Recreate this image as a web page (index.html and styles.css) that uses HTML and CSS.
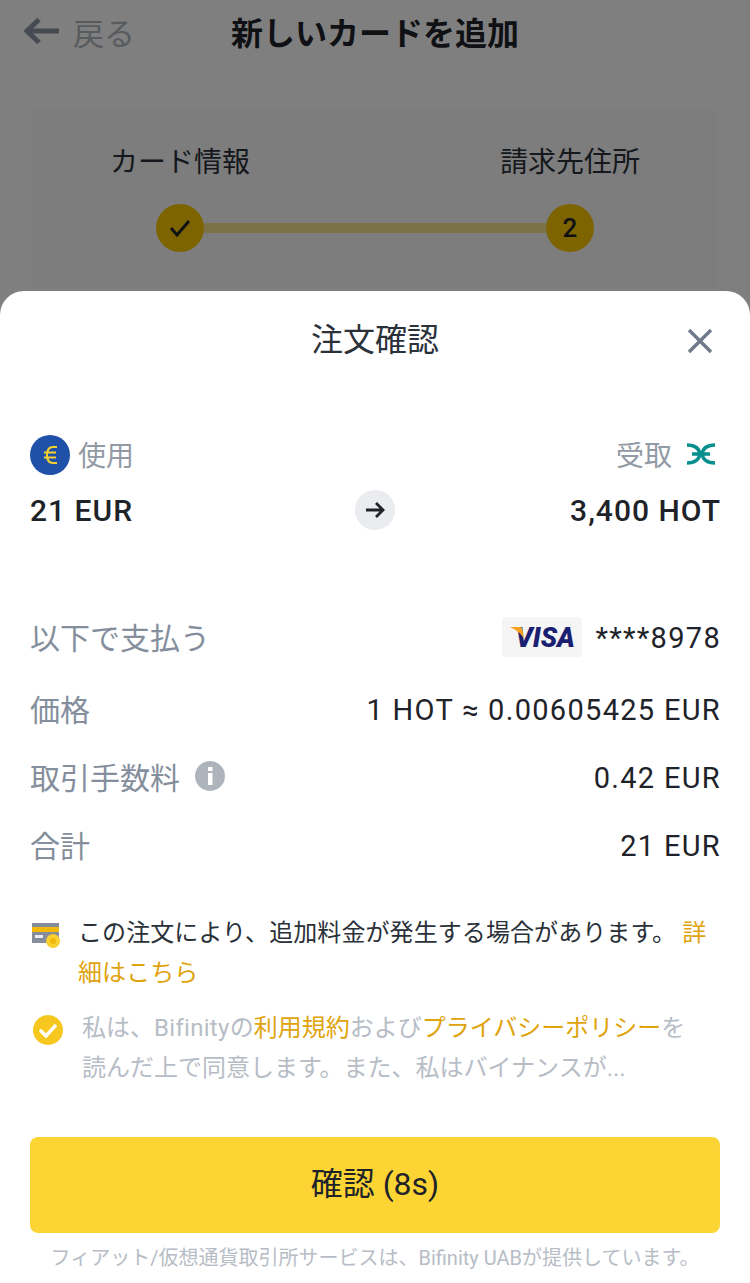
FILE: index.html
```html
<!DOCTYPE html>
<html lang="ja">
<head>
    <meta charset="UTF-8">
    <title>注文確認</title>
    <link rel="stylesheet" href="styles.css">
</head>

<body>
    <div class="page">
        <div class="topbar">
            <div class="back">
                <svg width="36" height="28" viewBox="0 0 36 28"><path d="M36 14H5M16 2.500L4 14l12 11.500" fill="none" stroke="#8c96a4" stroke-width="5"/></svg>
                <span>戻る</span>
            </div>
            <div class="topbar-title">新しいカードを追加</div>
        </div>
        <div class="steps">
            <div class="step-names">
                <span>カード情報</span>
                <span>請求先住所</span>
            </div>
            <div class="step-track">
                <div class="step-dot">
                    <svg width="24" height="20" viewBox="0 0 24 20"><path d="M3 10l6 7L21 3" fill="none" stroke="#1e2329" stroke-width="3"/></svg>
                </div>
                <div class="step-line"></div>
                <div class="step-dot">2</div>
            </div>
        </div>
    </div>

    <div class="dim"></div>

    <div class="sheet">
        <div class="sheet-head">
            <div class="sheet-title">注文確認</div>
            <svg class="close" width="26" height="26" viewBox="0 0 26 26"><path d="M2 2l22 22M24 2L2 24" fill="none" stroke="#707a8a" stroke-width="3.400"/></svg>
        </div>

        <div class="swap">
            <div class="swap-labels">
                <div class="coin">
                    <svg class="eur" width="40" height="40" viewBox="0 0 40 40"><circle cx="20" cy="20" r="20" fill="#1f51a8"/><path d="M27 12h-4c-4 0-6 3-6 8s2 8 6 8h4M14 17.500h12M14 22.500h12" fill="none" stroke="#f8d12f" stroke-width="2"/></svg>
                    <span>使用</span>
                </div>
                <div class="coin">
                    <span>受取</span>
                    <svg class="hot" width="30" height="22" viewBox="0 0 30 22"><path d="M1 2c7 0 12 3 13 9 -1 6-6 9-13 9M29 2c-7 0-12 3-13 9 1 6 6 9 13 9M6 11h18" fill="none" stroke="#0a8f8f" stroke-width="3.400"/></svg>
                </div>
            </div>
            <div class="swap-amounts">
                <span>21 EUR</span>
                <div class="arrow">
                    <svg width="20" height="18" viewBox="0 0 20 18"><path d="M1 9h17M11 2l7 7-7 7" fill="none" stroke="#1e2329" stroke-width="2.800"/></svg>
                </div>
                <span class="amount-end">3,400 HOT</span>
            </div>
        </div>

        <div class="rows">
            <div class="row">
                <span class="row-name">以下で支払う</span>
                <div class="pay">
                    <div class="visa">
                        <svg class="visa-mark" width="14" height="12" viewBox="0 0 14 12"><path d="M0 0h10c2 0 2 1 2.500 3L14 12C11 6 6 3 0 0z" fill="#f7a11c"/></svg>
                        <span class="visa-word">VISA</span>
                    </div>
                    <span class="val">****8978</span>
                </div>
            </div>
            <div class="row">
                <span class="row-name">価格</span>
                <span class="val">1 HOT ≈ 0.00605425 EUR</span>
            </div>
            <div class="row">
                <span class="row-name with-icon">取引手数料
                    <svg width="30" height="30" viewBox="0 0 30 30"><circle cx="15" cy="15" r="15" fill="#aeb4bc"/><rect x="13" y="12" width="4.500" height="12" fill="#fff"/><rect x="13" y="6" width="4.500" height="4" fill="#fff"/></svg>
                </span>
                <span class="val">0.42 EUR</span>
            </div>
            <div class="row">
                <span class="row-name">合計</span>
                <span class="val">21 EUR</span>
            </div>
        </div>

        <div class="note">
            <svg class="note-icon" width="30" height="26" viewBox="0 0 30 26"><rect x="2" y="0" width="27" height="20" fill="#858d9b"/><rect x="2" y="4" width="27" height="5" fill="#f0b90b"/><rect x="5" y="12" width="8" height="3" fill="#eaecef"/><circle cx="23" cy="18" r="7" fill="#f8d12f"/><circle cx="23" cy="18" r="3" fill="#f0b90b"/></svg>
            <p>この注文により、追加料金が発生する場合があります。 <a class="link">詳細はこちら</a></p>
        </div>

        <div class="agree">
            <svg class="agree-icon" width="30" height="30" viewBox="0 0 30 30"><circle cx="15" cy="15" r="15" fill="#f6c71f"/><path d="M7 15l6 6L23 10" fill="none" stroke="#fff" stroke-width="3.400"/></svg>
            <p>私は、<span class="latin">Bifinity</span>の<a class="link">利用規約</a>および<a class="link">プライバシーポリシー</a>を読んだ上で同意します。また、私はバイナンスが...</p>
        </div>

        <div class="confirm">確認 (8s)</div>
        <div class="foot">フィアット/仮想通貨取引所サービスは、Bifinity UABが提供しています。</div>
    </div>
</body></html>
```
FILE: styles.css
```css
* {
    box-sizing: border-box;
}
body {
    position: relative;
    width: 750px;
    height: 1283px;
    margin: 0;
    overflow: hidden;
    background-color: #fff;
    color: #1e2329;
    font-family: "Roboto", "Noto Sans CJK JP", sans-serif;
}

/* page behind the sheet */
.page {
    height: 100%;
}
.topbar {
    position: relative;
    display: flex;
    justify-content: center;
    align-items: center;
    height: 62px;
}
.back {
    position: absolute;
    top: 0;
    left: 23px;
    display: flex;
    align-items: center;
    gap: 14px;
    height: 62px;
    color: #b0b6bd;
    font-size: 31px;
}
.topbar-title {
    font-size: 32px;
    font-weight: 700;
}
.steps {
    height: 178px;
    margin: 48px 32px 0;
    padding-top: 33px;
    background-color: #fafafa;
}
.step-names {
    display: flex;
    justify-content: space-between;
    padding: 0 78px;
    color: #2b3139;
    font-size: 28px;
    line-height: 40px;
}
.step-track {
    display: flex;
    align-items: center;
    margin-top: 21px;
    padding: 0 124px;
}
.step-dot {
    display: flex;
    flex-shrink: 0;
    justify-content: center;
    align-items: center;
    width: 48px;
    height: 48px;
    border-radius: 50%;
    background-color: #fac800;
    font-size: 26px;
    font-weight: 500;
}
.step-line {
    flex: 1;
    height: 10px;
    background-color: #f8e594;
}
.dim {
    position: absolute;
    top: 0;
    left: 0;
    width: 100%;
    height: 100%;
    background-color: rgba(0, 0, 0, 0.5);
}

/* bottom sheet */
.sheet {
    position: absolute;
    top: 291px;
    left: 0;
    width: 100%;
    height: 992px;
    padding: 0 30px;
    border-radius: 24px 24px 0 0;
    background-color: #fff;
}
.sheet-head {
    position: relative;
    height: 100px;
    text-align: center;
}
.sheet-title {
    color: #2b3139;
    font-size: 32px;
    line-height: 98px;
}
.close {
    position: absolute;
    top: 37px;
    right: 7px;
}
.swap {
    margin-top: 44px;
}
.swap-labels,
.row,
.pay,
.coin {
    display: flex;
    align-items: center;
}
.swap-labels,
.row {
    justify-content: space-between;
}
.coin {
    gap: 8px;
    height: 38px;
    color: #929aa5;
    font-size: 28px;
}
.coin + .coin {
    gap: 14px;
}
.eur {
    margin-top: 2px;
}
.hot {
    margin-right: 4px;
}
.swap-amounts {
    display: grid;
    grid-template-columns: 1fr auto 1fr;
    align-items: center;
    height: 40px;
    margin-top: 17px;
    font-size: 30px;
    font-weight: 500;
    letter-spacing: 1px;
}
.amount-end {
    margin-right: -1px;
    text-align: right;
}
.arrow {
    display: flex;
    justify-content: center;
    align-items: center;
    width: 40px;
    height: 40px;
    border-radius: 50%;
    background-color: #eaecef;
}
.rows {
    margin-top: 68px;
    font-size: 29px;
}
.row {
    height: 68px;
}
.row:first-child {
    height: 76px;
}
.row-name {
    color: #848e9c;
    font-size: 30px;
}
.val {
    margin-top: 4px;
    margin-right: -1px;
    letter-spacing: 1.3px;
}
.with-icon {
    display: flex;
    align-items: center;
    gap: 15px;
}
.pay {
    gap: 13px;
}
.visa {
    position: relative;
    width: 80px;
    height: 40px;
    margin-top: 2px;
    padding-left: 13px;
    border-radius: 4px;
    background-color: #f5f5f5;
    color: #1a1f71;
    font-size: 27px;
    font-style: italic;
    font-weight: 900;
    line-height: 42px;
}
.visa-mark {
    position: absolute;
    top: 10px;
    left: 8px;
}
.note,
.agree {
    display: flex;
    font-size: 24px;
    line-height: 40px;
}
.note {
    margin-top: 35px;
    color: #2b3139;
    letter-spacing: 0.08px;
}
.note-icon {
    flex-shrink: 0;
    margin: 10px 18px 0 0;
}
.note p,
.agree p {
    margin: 0;
}
.agree {
    margin-top: 15px;
    color: #b7bdc6;
}
.agree p {
    padding-right: 16px;
}
.latin {
    letter-spacing: 0.3px;
}
.agree-icon {
    flex-shrink: 0;
    margin: 7px 19px 0 3px;
}
.link {
    color: #dfa30c;
}
.confirm {
    height: 96px;
    margin-top: 49px;
    border-radius: 8px;
    background-color: #fcd535;
    font-size: 32px;
    line-height: 94px;
    text-align: center;
}
.foot {
    margin-top: 11px;
    color: #b7bdc6;
    font-size: 20px;
    line-height: 28px;
    text-align: center;
}
```
